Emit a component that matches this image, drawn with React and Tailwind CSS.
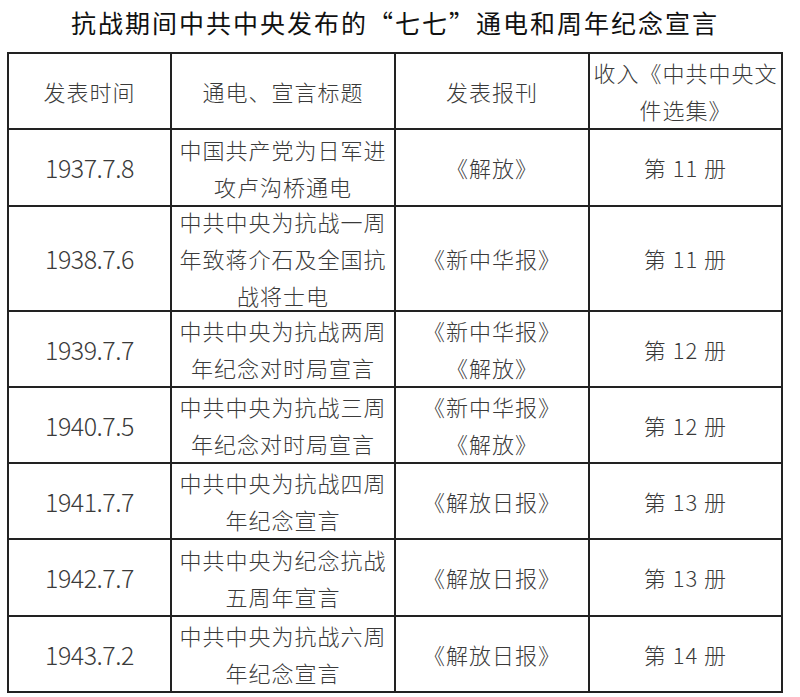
import React from "react";

const rows = [
  { h: "h-[77px]", date: "1937.7.8", title: ["中国共产党为日军进", "攻卢沟桥通电"], paper: ["《解放》"], vol: "第 11 册" },
  { h: "h-[105px]", date: "1938.7.6", title: ["中共中央为抗战一周", "年致蒋介石及全国抗", "战将士电"], paper: ["《新中华报》"], vol: "第 11 册" },
  { h: "h-[76px]", date: "1939.7.7", title: ["中共中央为抗战两周", "年纪念对时局宣言"], paper: ["《新中华报》", "《解放》"], vol: "第 12 册" },
  { h: "h-[76px]", date: "1940.7.5", title: ["中共中央为抗战三周", "年纪念对时局宣言"], paper: ["《新中华报》", "《解放》"], vol: "第 12 册" },
  { h: "h-[76px]", date: "1941.7.7", title: ["中共中央为抗战四周", "年纪念宣言"], paper: ["《解放日报》"], vol: "第 13 册" },
  { h: "h-[77px]", date: "1942.7.7", title: ["中共中央为纪念抗战", "五周年宣言"], paper: ["《解放日报》"], vol: "第 13 册" },
  { h: "h-[76px]", date: "1943.7.2", title: ["中共中央为抗战六周", "年纪念宣言"], paper: ["《解放日报》"], vol: "第 14 册" },
];

function Cell({ children, className = "" }) {
  return (
    <div
      className={
        "flex flex-col items-center justify-center text-center border-r-2 border-b-2 border-[#222] overflow-visible whitespace-nowrap " +
        className
      }
    >
      {children}
    </div>
  );
}

function Lines({ lines }) {
  return (
    <div className="leading-[37px]">
      {lines.map((l, i) => (
        <div key={i}>{l}</div>
      ))}
    </div>
  );
}

export default function App() {
  return (
    <div
      className="w-[800px] h-[697px] bg-white text-[#3a3a3a] overflow-hidden"
      style={{ fontFamily: '"Noto Sans CJK SC", "Noto Sans", sans-serif' }}
    >
      <div className="h-[52px] pr-[10px] leading-[44px] text-center text-[25px] tracking-[2px] text-[#111] font-normal">
        抗战期间中共中央发布的“七七”通电和周年纪念宣言
      </div>
      <div className="ml-[7px] w-[776px] border-l-2 border-t-2 border-[#222] grid grid-cols-[163px_224px_194px_193px] text-[22px] tracking-[1px] font-light">
        <Cell className="h-[76px]">
          <div className="leading-[37px]">发表时间</div>
        </Cell>
        <Cell className="h-[76px]">
          <div className="leading-[37px]">通电、宣言标题</div>
        </Cell>
        <Cell className="h-[76px]">
          <div className="leading-[37px]">发表报刊</div>
        </Cell>
        <Cell className="h-[76px]">
          <Lines lines={["收入《中共中央文", "件选集》"]} />
        </Cell>
        {rows.map((r, i) => (
          <React.Fragment key={i}>
            <Cell className={r.h}>
              <div className="text-[25px] tracking-[-0.5px] leading-[37px]">{r.date}</div>
            </Cell>
            <Cell className={r.h}>
              <Lines lines={r.title} />
            </Cell>
            <Cell className={r.h}>
              <Lines lines={r.paper} />
            </Cell>
            <Cell className={r.h}>
              <div className="leading-[37px]">{r.vol}</div>
            </Cell>
          </React.Fragment>
        ))}
      </div>
    </div>
  );
}
